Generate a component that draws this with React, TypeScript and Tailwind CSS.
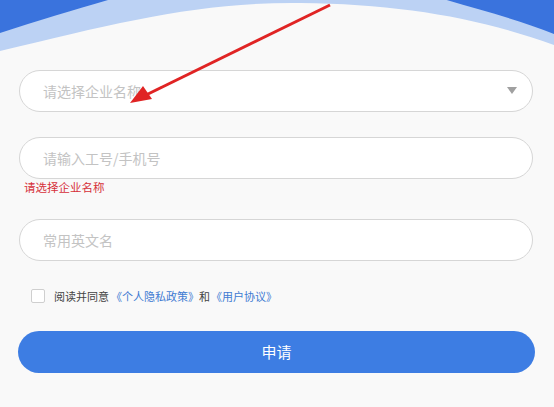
import React, { useState } from 'react';

const font = { fontFamily: '"Noto Sans CJK SC", "Noto Sans", sans-serif' };

// curved blue banner at the top of the form
function Header() {
  return (
    <svg className="block h-[60px] w-full" viewBox="0 0 554 60" preserveAspectRatio="none">
      <rect x="0" y="0" width="554" height="60" fill="#3a73dd" />
      <path d="M0,33 C40,20 80,8 115,-2 L440,-2 C480,10 520,20 554,34 L554,60 L0,60 Z" fill="#bcd2f4" />
      <path d="M0,51 C120,22 200,2 300,3 C400,4 480,18 554,45 L554,60 L0,60 Z" fill="#f9f9f9" />
    </svg>
  );
}

function Field({ placeholder, select }: { placeholder: string; select?: boolean }) {
  return (
    <div className="flex h-[42px] items-center rounded-full border border-[#d6d6d6] bg-white pl-[23px] pr-[15px]">
      <input
        className="min-w-0 flex-1 bg-transparent text-[14px] text-[#333] outline-none placeholder:text-[#c3c3c3]"
        placeholder={placeholder}
        readOnly={select}
      />
      {select && (
        <svg width="10" height="8" viewBox="0 0 10 8">
          <path d="M0,0 L10,0 L5,7 Z" fill="#a0a0a0" />
        </svg>
      )}
    </div>
  );
}

export default function App() {
  const [agree, setAgree] = useState(false);

  return (
    <div className="relative min-h-[407px] overflow-hidden bg-[#f9f9f9]" style={font}>
      <Header />

      <div className="pl-[19px] pr-[21px] pt-[10px]">
        <Field placeholder="请选择企业名称" select />
        <div className="mt-[25px]">
          <Field placeholder="请输入工号/手机号" />
        </div>
        <p className="pl-[5px] text-[11.5px] leading-4 text-[#d6303a]">请选择企业名称</p>
        <div className="mt-[24px]">
          <Field placeholder="常用英文名" />
        </div>

        <label className="mt-[25px] flex h-5 items-center pl-[12px] text-[11px]">
          <span
            onClick={() => setAgree(!agree)}
            className={`h-[14px] w-[14px] rounded-[2px] border ${agree ? 'border-[#3d7de3] bg-[#3d7de3]' : 'border-[#cfcfcf] bg-white'}`}
          />
          <span className="ml-[9px] text-[#444]">阅读并同意</span>
          <span className="ml-[2px] text-[#3f7bd2]">《个人隐私政策》</span>
          <span className="text-[#444]">和</span>
          <span className="ml-[1px] text-[#3f7bd2]">《用户协议》</span>
        </label>
      </div>

      <div className="pl-[18px] pr-[19px] pt-[25px]">
        <button className="h-[42px] w-full rounded-full bg-[#3d7de3] text-[15px] text-white">申请</button>
      </div>

      {/* annotation arrow */}
      <svg className="pointer-events-none absolute left-0 top-0" width="554" height="407">
        <line x1="330" y1="5" x2="146" y2="95" stroke="#e02424" strokeWidth="3" />
        <path d="M130,103 L143,86 L152,99 Z" fill="#e02424" />
      </svg>
    </div>
  );
}
